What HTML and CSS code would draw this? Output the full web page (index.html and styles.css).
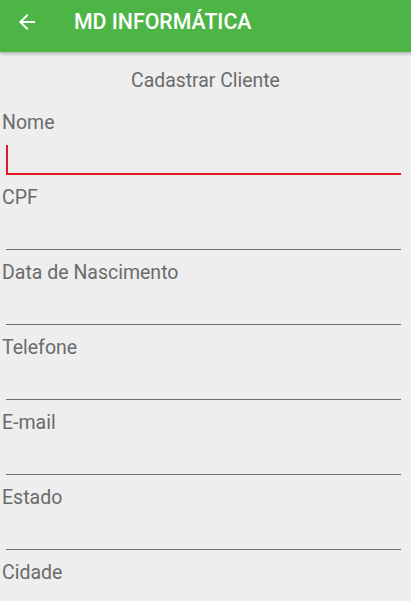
FILE: index.html
```html
<!DOCTYPE html>
<html lang="pt">
<head>
<meta charset="utf-8">
<title>MD Informática</title>
<link rel="stylesheet" href="styles.css">
</head>
<body>
<header class="appbar">
  <svg class="back" viewBox="0 0 24 24" width="24" height="24" aria-hidden="true">
    <path d="M20 11H7.83l5.59-5.59L12 4l-8 8 8 8 1.41-1.41L7.83 13H20v-2z" fill="#ffffff"/>
  </svg>
  <h1 class="title">MD INFORMÁTICA</h1>
</header>
<main class="form">
  <h2 class="heading">Cadastrar Cliente</h2>
  <div class="field focused">
    <label class="label">Nome</label>
    <div class="input"><span class="cursor"></span></div>
  </div>
  <div class="field">
    <label class="label">CPF</label>
    <div class="input"></div>
  </div>
  <div class="field">
    <label class="label">Data de Nascimento</label>
    <div class="input"></div>
  </div>
  <div class="field">
    <label class="label">Telefone</label>
    <div class="input"></div>
  </div>
  <div class="field">
    <label class="label">E-mail</label>
    <div class="input"></div>
  </div>
  <div class="field">
    <label class="label">Estado</label>
    <div class="input"></div>
  </div>
  <div class="field">
    <label class="label">Cidade</label>
    <div class="input"></div>
  </div>
</main>
</body>
</html>
```
FILE: styles.css
```css
html, body {
  margin: 0;
  padding: 0;
  background: #eeeeee;
  font-family: Roboto, "Liberation Sans", sans-serif;
  overflow: hidden;
  height: 601px;
}
.appbar {
  position: relative;
  z-index: 1;
  display: flex;
  align-items: center;
  height: 44px;
  padding: 0 0 8px 0;
  background: #4db546;
  box-shadow: 0 2px 3px rgba(0, 0, 0, 0.25);
}
.back {
  display: block;
  margin-left: 15px;
  flex: none;
}
.title {
  margin: 0 0 0 35px;
  color: #ffffff;
  font-size: 21.3px;
  font-weight: 500;
  line-height: 24px;
}
.form {
  display: flex;
  flex-direction: column;
  padding-top: 18px;
}
.heading {
  margin: 0 0 21px 0;
  text-align: center;
  font-size: 19.4px;
  font-weight: 400;
  line-height: 21px;
  color: #6b6b6b;
}
.field {
  display: flex;
  flex-direction: column;
  margin-bottom: 12px;
}
.label {
  padding-left: 2px;
  font-size: 19.5px;
  line-height: 21px;
  color: #6b6b6b;
}
.input {
  height: 41px;
  margin: 0 10px 0 6px;
  border-bottom: 1px solid #6f6f6f;
  display: flex;
  align-items: flex-end;
}
.field.focused .input {
  height: 40px;
  border-bottom: 2px solid #dc1e24;
}
.cursor {
  display: block;
  width: 2px;
  height: 28px;
  background: #dc1e24;
}
```
